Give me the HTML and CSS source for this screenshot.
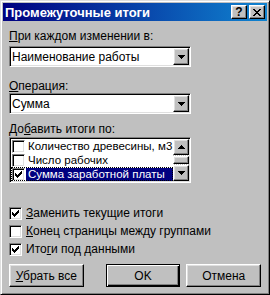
FILE: index.html
```html
<!DOCTYPE html>
<html lang="ru">
<head>
    <meta charset="UTF-8">
    <title>Промежуточные итоги</title>
    <link rel="stylesheet" href="styles.css">
</head>
<body>
    <div class="window">
        <div class="titlebar">
            <span class="title">Промежуточные итоги</span>
            <div class="title-buttons">
                <button class="tb-btn">?</button>
                <button class="tb-btn">
                    <svg width="8" height="7" viewBox="0 0 8 7" shape-rendering="crispEdges">
                        <path d="M0 0h2v1H0zM6 0h2v1H6zM1 1h2v1H1zM5 1h2v1H5zM2 2h4v1H2zM3 3h2v1H3zM2 4h4v1H2zM1 5h2v1H1zM5 5h2v1H5zM0 6h2v1H0zM6 6h2v1H6z" fill="#000"/>
                    </svg>
                </button>
            </div>
        </div>

        <div class="content">
            <label class="field-label first"><u>П</u>ри каждом изменении в:</label>
            <div class="combo">
                <span class="combo-text">Наименование работы</span>
                <span class="combo-btn">
                    <svg width="7" height="4" viewBox="0 0 7 4" shape-rendering="crispEdges"><path d="M0 0h7v1H0zM1 1h5v1H1zM2 2h3v1H2zM3 3h1v1H3z" fill="#000"/></svg>
                </span>
            </div>

            <label class="field-label"><u>О</u>перация:</label>
            <div class="combo">
                <span class="combo-text">Сумма</span>
                <span class="combo-btn">
                    <svg width="7" height="4" viewBox="0 0 7 4" shape-rendering="crispEdges"><path d="M0 0h7v1H0zM1 1h5v1H1zM2 2h3v1H2zM3 3h1v1H3z" fill="#000"/></svg>
                </span>
            </div>

            <label class="field-label list-label">До<u>б</u>авить итоги по:</label>
            <div class="listbox">
                <div class="list-rows">
                    <div class="list-row">
                        <span class="chk"></span>
                        <span class="list-text">Количество древесины, м3</span>
                    </div>
                    <div class="list-row">
                        <span class="chk"></span>
                        <span class="list-text">Число рабочих</span>
                    </div>
                    <div class="list-row selected">
                        <span class="chk">
                            <svg width="7" height="7" viewBox="0 0 7 7" shape-rendering="crispEdges"><path d="M0 2h1v3H0zM1 3h1v3H1zM2 4h1v3H2zM3 3h1v3H3zM4 2h1v3H4zM5 1h1v3H5zM6 0h1v3H6z" fill="#000"/></svg>
                        </span>
                        <span class="list-text">Сумма заработной платы</span>
                    </div>
                </div>
                <div class="scrollbar">
                    <span class="sb-btn">
                        <svg width="7" height="4" viewBox="0 0 7 4" shape-rendering="crispEdges"><path d="M3 0h1v1H3zM2 1h3v1H2zM1 2h5v1H1zM0 3h7v1H0z" fill="#000"/></svg>
                    </span>
                    <span class="sb-track"><span class="sb-thumb"></span></span>
                    <span class="sb-btn">
                        <svg width="7" height="4" viewBox="0 0 7 4" shape-rendering="crispEdges"><path d="M0 0h7v1H0zM1 1h5v1H1zM2 2h3v1H2zM3 3h1v1H3z" fill="#000"/></svg>
                    </span>
                </div>
            </div>

            <div class="options">
                <div class="option">
                    <span class="chk">
                        <svg width="7" height="7" viewBox="0 0 7 7" shape-rendering="crispEdges"><path d="M0 2h1v3H0zM1 3h1v3H1zM2 4h1v3H2zM3 3h1v3H3zM4 2h1v3H4zM5 1h1v3H5zM6 0h1v3H6z" fill="#000"/></svg>
                    </span>
                    <span><u>З</u>аменить текущие итоги</span>
                </div>
                <div class="option">
                    <span class="chk"></span>
                    <span><u>К</u>онец страницы между группами</span>
                </div>
                <div class="option">
                    <span class="chk">
                        <svg width="7" height="7" viewBox="0 0 7 7" shape-rendering="crispEdges"><path d="M0 2h1v3H0zM1 3h1v3H1zM2 4h1v3H2zM3 3h1v3H3zM4 2h1v3H4zM5 1h1v3H5zM6 0h1v3H6z" fill="#000"/></svg>
                    </span>
                    <span>Ито<u>г</u>и под данными</span>
                </div>
            </div>

            <div class="actions">
                <button class="btn"><u>У</u>брать все</button>
                <button class="btn btn-default">OK</button>
                <button class="btn">Отмена</button>
            </div>
        </div>
    </div>
</body>
</html>
```

FILE: styles.css
```css
* {
    box-sizing: border-box;
}
body {
    margin: 0;
    font-family: "Liberation Sans", Arial, sans-serif;
    font-size: 12px;
    color: #000;
    background: #c0c0c0;
}
u {
    text-underline-offset: 1px;
}
.window {
    width: 270px;
    height: 295px;
    padding: 2px;
    background: #c0c0c0;
    border: 1px solid;
    border-color: #dfdfdf #000 #000 #dfdfdf;
    box-shadow: inset 1px 1px #fff, inset -1px -1px #808080;
}
.titlebar {
    height: 18px;
    display: flex;
    align-items: center;
    justify-content: space-between;
    padding: 0 2px 0 2px;
    background: linear-gradient(to right, #000080, #1084d0);
}
.title {
    color: #fff;
    font-weight: bold;
    font-size: 13px;
}
.title-buttons {
    display: flex;
    gap: 2px;
}
.tb-btn,
.combo-btn,
.sb-btn,
.sb-thumb,
.btn {
    background: #c0c0c0;
    border: 1px solid;
    border-color: #fff #000 #000 #fff;
    box-shadow: inset -1px -1px #808080, inset 1px 1px #dfdfdf;
}
.tb-btn {
    width: 16px;
    height: 14px;
    padding: 0;
    display: flex;
    align-items: center;
    justify-content: center;
    font: bold 12px "Liberation Sans", Arial, sans-serif;
    line-height: 1;
}
.content {
    padding: 0 6px;
}
.field-label {
    display: block;
    line-height: 13px;
    margin-top: 13px;
}
.field-label.first {
    margin-top: 9px;
    margin-bottom: 3px;
}
.list-label {
    margin-top: 9px;
    margin-bottom: 1px;
}

/* sunken fields */
.combo,
.listbox {
    width: 182px;
    background: #fff;
    border: 1px solid;
    border-color: #808080 #fff #fff #808080;
    box-shadow: inset 1px 1px #000, inset -1px -1px #dfdfdf;
    padding: 1px;
}
.combo {
    height: 21px;
    display: flex;
    align-items: center;
}
.combo-text {
    flex: 1;
    padding-left: 1px;
}
.combo-btn {
    width: 16px;
    height: 17px;
    display: flex;
    align-items: center;
    justify-content: center;
}
.listbox {
    height: 46px;
    display: flex;
}
.list-rows {
    flex: 1;
    min-width: 0;
}
.list-row {
    height: 14px;
    display: flex;
    align-items: center;
    padding-left: 1px;
}
.list-row .chk {
    margin-right: 1px;
}
.list-text {
    flex: 1;
    font-size: 11.5px;
    line-height: 13px;
    padding-left: 2px;
    white-space: nowrap;
}
.list-row.selected {
    outline: 1px dotted #000;
    outline-offset: -1px;
}
.list-row.selected .list-text {
    background: #000080;
    color: #fff;
}
.scrollbar {
    width: 16px;
    display: flex;
    flex-direction: column;
}
.sb-btn {
    height: 16px;
    display: flex;
    align-items: center;
    justify-content: center;
}
.sb-track {
    flex: 1;
    padding: 1px 0;
    background: repeating-conic-gradient(#fff 0 25%, #c0c0c0 0 50%) 0 0 / 2px 2px;
}
.sb-thumb {
    display: block;
    height: 8px;
}

/* checkboxes */
.chk {
    width: 13px;
    height: 13px;
    flex: none;
    display: flex;
    align-items: center;
    justify-content: center;
    background: #fff;
    border: 1px solid;
    border-color: #808080 #fff #fff #808080;
    box-shadow: inset 1px 1px #000, inset -1px -1px #dfdfdf;
}
.options {
    margin-top: 21px;
}
.option {
    height: 18px;
    display: flex;
    align-items: center;
    gap: 4px;
    white-space: nowrap;
}

/* buttons */
.actions {
    margin-top: 6px;
    display: flex;
}
.btn {
    width: 75px;
    height: 23px;
    padding: 0;
    font: 12px "Liberation Sans", Arial, sans-serif;
    color: #000;
}
.btn-default {
    margin-left: 22px;
    margin-right: 6px;
    border-color: #000;
    box-shadow: inset 1px 1px #fff, inset -1px -1px #000, inset -2px -2px #808080;
}
```
